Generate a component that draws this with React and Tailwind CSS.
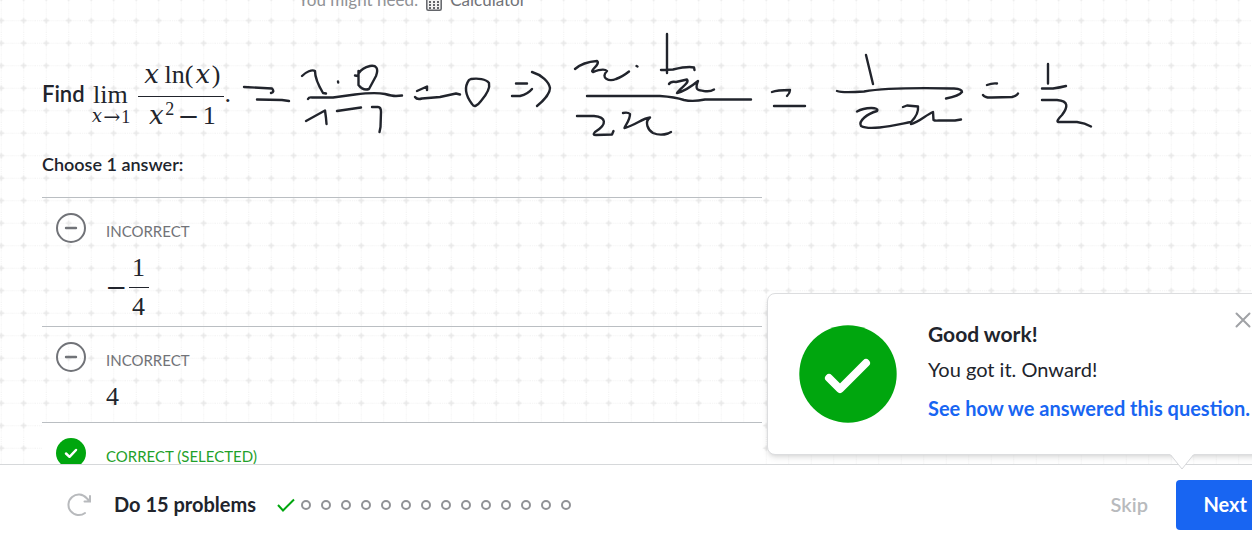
import React from "react";

const strokes = [
  "M244 87 L272 88.5 Q275 92 271 93",
  "M257 99.500 L282 100 L289 101",
  "M302 76 C306 72 312 69 315 71 C315 79 320 88 323 93 L326 93.500",
  "M338 81.500 L338.200 82.500",
  "M355 75.500 L358 76 M358.500 71 L358.500 85 Q363 91 369 89 L376 76 C379 68 376 65 370 66 Q362 68 359 73",
  "M308 99 Q309 97 312 97.500 L333 97.500 L355 94.500 Q375 92 385 94 Q392 96 396 96 L402 95.500",
  "M306 121 L325 110.500 L326 118 L326.500 124",
  "M337 111 L361 107.500",
  "M372 107 L378 107 Q381 107 381 112 L380.500 127 L379.500 132",
  "M417 91 L427 86.500 L427 90",
  "M415 97 Q417 100 422 98.500 L440 97 L456 93.500 L460 94.500",
  "M469 80 C464 87 466 96 472 104 Q475 109 481 101 C487 94 490 87 489 83 C486 79 478 78 471 79 Z",
  "M516 83.500 L527 83.500 M512 96 L520 96 Q528 94 532 89",
  "M532 72 C542 75 549 82 550 88 C550 94 542 102 537 106",
  "M575 69 Q583 62 597 61 C601 64 589 71 593 72 Q604 68 607 71 C600 78 609 82 616 79 Q622 77 629 71.500",
  "M636.500 66 L637.500 66.500",
  "M667 34 L667 73 M661 70 L673 69.500 Q688 66 694 67.500 L694.500 70",
  "M669 84 Q671 81 676 82 L687 79.500 C690 83 680 88 677 93 C685 91 692 86 698 81 C694 91 699 90 704 91 Q710 92 714 89.500",
  "M587 96 L660 96 Q675 97 684 100 Q693 102 705 99.500 L751 99.500",
  "M577 116 L594 116 C606 117 608 124 595 132 Q592 135 596 135 L612 134.500 L613.500 131",
  "M623 113 Q628 112 630 114 C630 121 625 125 624.500 128 C634 126 643 118 650 117.500 C644 122 648 130 653 133 Q660 136 668 133.500 L671 132",
  "M772 92 Q777 90 790 90 Q790 93 787 96 M774 106 L805 106",
  "M866 55 L873 84",
  "M837 91 Q842 93 864 91.500 C890 87 930 88 954 88.500 Q962 89 962 92 Q959 96 946 98.500",
  "M857 111.500 C865 107 880 107 877 111 C867 114 858 121 861 126 C870 131 895 125 911 122 Q919 114 918 106.500 L907 105.500 L903 107",
  "M911 124 C918 123 926 115 933 112 L933.500 120 Q935 121 939 120.500 L955 120.500 L961 119.500",
  "M987 85 Q992 83 997 83.500 M983 95 Q985 98 992 97.500 L1012 97 Q1017 95.500 1018 93.500",
  "M1048 64 L1048 83.500 M1042 88.500 L1053 88.500 Q1060 87.500 1066 86",
  "M1042 100 L1057 100 C1069 101 1068 107 1062 115 Q1056 121 1058 122 L1077 122 Q1085 123 1091 126.500",
];

function GridPaper() {
  return (
    <svg className="absolute inset-0 h-full w-full" aria-hidden="true">
      <defs>
        <pattern id="grid" width="22.5" height="22.5" x="-10" y="-13" patternUnits="userSpaceOnUse">
          <path d="M11.200 0V22.500M0 11.200H22.500" stroke="#f2f2f2" strokeDasharray="1 1" />
          <path d="M11.200 8.500V14M8.500 11.200H14" stroke="#e8e8e8" strokeWidth="1.7" />
        </pattern>
      </defs>
      <rect width="100%" height="100%" fill="url(#grid)" />
    </svg>
  );
}

function Handwriting() {
  return (
    <svg
      className="pointer-events-none absolute top-0 left-0 h-[160px] w-[1120px]"
      viewBox="0 0 1120 160"
      fill="none"
      stroke="#21242c"
      strokeWidth="2.4"
      strokeLinecap="round"
      strokeLinejoin="round"
      aria-hidden="true"
    >
      {strokes.map((d) => (
        <path key={d} d={d} />
      ))}
    </svg>
  );
}

function X() {
  return <i className="font-['DejaVu_Math_TeX_Gyre','Liberation_Serif',serif] not-italic">𝑥</i>;
}

function Sign({ children }) {
  return <span className="font-['DejaVu_Math_TeX_Gyre','DejaVu_Serif',serif]">{children}</span>;
}

function Limit() {
  return (
    <div className="flex items-center font-['Liberation_Serif',serif] text-[26px] leading-8">
      <div className="flex flex-col items-center pt-[13px]">
        <span className="leading-7">lim</span>
        <span className="flex text-lg leading-4">
          <X />
          <Sign>→</Sign>1
        </span>
      </div>
      <div className="ml-2 flex flex-col items-center">
        <span className="flex h-9 items-center gap-1 px-1 pb-1.5">
          <X /> <span>ln(<X />)</span>
        </span>
        <span className="h-px w-full bg-[#21242c]" />
        <span className="flex h-9 items-center gap-1 pt-0.5">
          <span>
            <X />
            <sup className="text-lg leading-none">2</sup>
          </span>
          <Sign>−</Sign>
          <span>1</span>
        </span>
      </div>
      <span className="pb-1">.</span>
    </div>
  );
}

function Wrong({ children }) {
  return (
    <li className="flex border-t border-[#babec2] pt-[15px] pl-3.5">
      <svg className="size-[30px] shrink-0" viewBox="0 0 30 30" fill="none" stroke="#717378" aria-hidden="true">
        <circle cx="15" cy="15" r="14" strokeWidth="2" />
        <path d="M10 15H20" strokeWidth="2.4" strokeLinecap="round" />
      </svg>
      <div className="ml-5">
        <p className="mt-2 text-[15px] leading-5 text-[#717378]">INCORRECT</p>
        <div className="font-['Liberation_Serif',serif] text-[26px]">{children}</div>
      </div>
    </li>
  );
}

function Feedback() {
  return (
    <section
      aria-label="Feedback"
      className="absolute -right-4 bottom-[82px] flex h-[162px] w-[501px] items-center rounded-lg border border-[#dcdddf] bg-white pl-[31px] shadow-md"
    >
      <svg className="size-[98px] shrink-0" viewBox="0 0 98 98" fill="none" aria-hidden="true">
        <circle cx="49" cy="49" r="48.7" fill="#00a60e" />
        <path d="M30 53L41 64L67 38" stroke="#fff" strokeWidth="8" strokeLinecap="round" strokeLinejoin="round" />
      </svg>
      <div className="ml-[31px] pb-1.5 text-xl whitespace-nowrap">
        <h2 className="text-[21px] leading-6 font-bold">Good work!</h2>
        <p className="mt-[11px] leading-6">You got it. Onward!</p>
        <a href="#answer" className="mt-[15px] block leading-6 font-bold text-[#1865f2]">
          See how we answered this question.
        </a>
      </div>
      <button type="button" aria-label="Close" className="absolute top-[18px] right-4 size-4">
        <svg viewBox="0 0 16 16" fill="none" stroke="#a0a2a6" strokeWidth="2" strokeLinecap="round">
          <path d="M1.500 1.500L14.500 14.500M14.500 1.500L1.500 14.500" />
        </svg>
      </button>
      <svg className="absolute -bottom-4 left-[402px] h-4 w-6" viewBox="0 0 24 16" aria-hidden="true">
        <path d="M0 0L12 15L24 0" fill="#fff" stroke="#d6d8da" />
        <path d="M0 0H24" stroke="#fff" />
      </svg>
    </section>
  );
}

export default function App() {
  return (
    <div className="relative flex h-screen flex-col overflow-hidden bg-white font-['Lato',sans-serif] text-[#21242c]">
      <main className="relative min-h-0 flex-1 overflow-hidden">
        <GridPaper />
        <div className="relative max-w-[762px] pl-[42px]">
          <p className="-mt-3 flex items-center justify-center gap-2 pl-5 text-[17px] leading-6 text-[#909296]">
            You might need:
            <svg className="mt-1.5 size-4" viewBox="0 0 16 16" fill="none" aria-hidden="true">
              <rect x="0.800" y="0.800" width="14.400" height="14.400" rx="1.500" fill="#f2f2f2" stroke="#63656a" strokeWidth="1.500" />
              <path d="M3 3H13" stroke="#63656a" strokeWidth="2" />
              <path d="M3 7H13M3 10H13M3 13H13" stroke="#63656a" strokeWidth="1.800" strokeDasharray="2 2" />
            </svg>
            <span className="text-[#717378]">Calculator</span>
          </p>
          <div className="mt-[47px] flex h-[74px] items-center gap-1.5 text-[22px]">
            <span className="pb-1.5 font-semibold">Find</span>
            <Limit />
          </div>
          <h2 className="mt-[19px] text-lg leading-6 font-semibold">Choose 1 answer:</h2>
          <ul className="mt-[21px]">
            <Wrong>
              <div className="flex h-[85px] items-center pt-2">
                <Sign>−</Sign>
                <span className="ml-0.5 flex flex-col items-center leading-[38px]">
                  <span>1</span>
                  <span className="h-px w-5 bg-[#21242c]" />
                  <span>4</span>
                </span>
              </div>
            </Wrong>
            <Wrong>
              <div className="h-[52px] pt-[11px] leading-8">4</div>
            </Wrong>
            <li className="flex border-t border-[#babec2] bg-white pt-[15px] pb-10 pl-3.5">
              <svg className="size-[30px] shrink-0" viewBox="0 0 30 30" fill="none" aria-hidden="true">
                <circle cx="15" cy="15" r="15" fill="#00a60e" />
                <path d="M10 15.500L13.500 18.800L20 12" stroke="#fff" strokeWidth="2.500" strokeLinecap="round" strokeLinejoin="round" />
              </svg>
              <p className="mt-2 ml-5 text-[15px] leading-5 text-[#1fa12a]">CORRECT (SELECTED)</p>
            </li>
          </ul>
        </div>
        <Handwriting />
      </main>
      <footer className="flex h-[73px] shrink-0 items-start border-t border-[#d6d8da] bg-white pt-[15px] pl-[66px]">
        <div className="flex h-[50px] items-center">
          <button type="button" aria-label="Restart">
            <svg className="size-[26px]" viewBox="0 0 26 26" fill="none" stroke="#b8babd" strokeWidth="2" strokeLinecap="round" aria-hidden="true">
              <path d="M19 21A10.300 10.300 0 1 1 20.500 6L23 8.500M24 4V9.500H18.500" />
            </svg>
          </button>
          <span className="ml-[22px] pb-0.5 text-xl font-bold whitespace-nowrap">Do 15 problems</span>
          <div className="ml-[21px] flex items-center">
            <svg className="mr-1.5 h-3.5 w-[18px]" viewBox="0 0 18 14" fill="none" stroke="#00a60e" strokeWidth="2" aria-hidden="true">
              <path d="M1 7L6 12.500L17 1.500" />
            </svg>
            <div className="flex gap-2.5">
              {Array.from({ length: 14 }, (_, i) => (
                <span key={i} className="size-2.5 rounded-full border-2 border-[#909296]" />
              ))}
            </div>
          </div>
        </div>
        <div className="-mr-[105px] ml-auto flex shrink-0 items-center gap-7">
          <button type="button" className="pb-0.5 text-xl font-semibold text-[#b8babd]">Skip</button>
          <button type="button" className="h-[50px] w-[181px] rounded bg-[#1865f2] pb-0.5 text-xl font-bold whitespace-nowrap text-white">
            Next question
          </button>
        </div>
      </footer>
      <Feedback />
    </div>
  );
}
